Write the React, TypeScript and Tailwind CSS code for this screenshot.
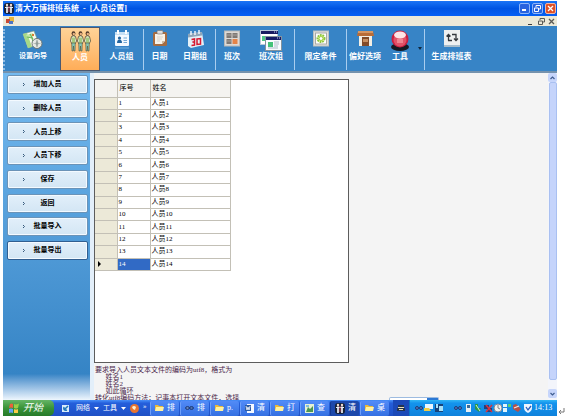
import type { ReactNode } from 'react';

const people = Array.from({ length: 14 }, (_, i) => i + 1);
const actions = ['增加人员', '删除人员', '人员上移', '人员下移', '保存', '返回', '批量导入', '批量导出'];

function WizardIcon() {
  return (
    <svg width="22" height="20" viewBox="0 0 22 20">
      <path d="M1 4 12 1l5 13-11 4z" fill="#f7fbef" stroke="#7f9d82" strokeWidth=".6" />
      <path d="m1 4 4-1 5 14-4 1z" fill="#a6d987" />
      <path d="m4 5 7-2 1 3-6 2z" fill="#c5e6a6" />
      <path d="m5 7 5 1 1 4 4 1M8 4l3 5" fill="none" stroke="#6cb75e" strokeWidth="1.100" />
      <path d="m10 4 2 2M12 4l-2 2" stroke="#d87b32" />
      <circle cx="15" cy="13.500" r="5" fill="#e6e9e4" stroke="#6b7575" />
      <path d="m15 10 1.200 3.500L15 17l-1.200-3.500zM11.500 13.500h7" fill="#8f9b98" stroke="#8f9b98" strokeWidth=".5" />
    </svg>
  );
}

function PeopleIcon() {
  return (
    <svg width="21" height="21" viewBox="0 0 21 21">
      {[3.5, 10.5, 17.5].map((x) => (
        <g key={x} transform={`translate(${x} 0)`}>
          <ellipse cx="0" cy="2.500" rx="1.900" ry="2.200" fill="#4a3426" />
          <circle cx=".3" cy="3" r="1.200" fill="#e6b083" />
          <path d="M-2 5.500Q0 4 2 5.500L3 10 1.500 13h-3L-3 10z" fill="#eef4d6" stroke="#4b4b35" strokeWidth=".8" />
          <path d="M-1.500 6.500h3V12h-3z" fill="#a5cb80" />
          <path d="M-1.800 12h3.600L1.500 20H.4L0 15l-.4 5h-1.100z" fill="#86c6b4" stroke="#54543b" strokeWidth=".6" />
        </g>
      ))}
    </svg>
  );
}

function GroupIcon() {
  return (
    <svg width="16" height="19" viewBox="0 0 16 19">
      <rect x="1" y="2" width="14" height="14" rx="1" fill="#f4faff" />
      <path d="M1 2h14v3H1z" fill="#c6e0f5" />
      <path d="M4 0v4M12 0v4" stroke="#fff" strokeWidth="2" />
      <circle cx="5.500" cy="8" r="1.600" fill="#23659f" />
      <path d="M3 13q0-3.500 2.500-3.500T8 13z" fill="#23659f" />
      <path d="M9.500 8H13M9.500 10.500H13M9.500 12.500H13" stroke="#75a9d5" />
      <path d="M1 18h14" stroke="#75b1df" />
    </svg>
  );
}

function ClipboardIcon() {
  return (
    <svg width="16" height="19" viewBox="0 0 16 19">
      <rect x="1" y="2" width="14" height="14" rx="1.500" fill="#a56c42" />
      <path d="M3 4h10v7l-3 3H3z" fill="#f8f3ea" />
      <path d="M13 11h-3v3z" fill="#cfbba3" />
      <rect x="5" y=".5" width="6" height="3.500" rx="1" fill="#dedede" stroke="#78706a" strokeWidth=".6" />
      <path d="M5 7h6M5 9h5M5 11h3" stroke="#cfc6bd" strokeWidth=".7" />
    </svg>
  );
}

function CalendarIcon() {
  return (
    <svg width="17" height="19" viewBox="0 0 17 19">
      <path d="m1 4 14-2 2 13-13 3L1 16z" fill="#e4f0f7" />
      <path d="m1 4 14-2v3.500L1 7.500z" fill="#8fa6ba" />
      <path d="M4 1v4M8 1v4M12 0v4" stroke="#f8fbff" strokeWidth="1.400" />
      <path d="m4.500 9.500 3-.5v2.700l-2 .3 2 .2V15l-3 .5M10 9l3.500-.5V14l-3.500.5z" fill="none" stroke="#d71930" strokeWidth="1.500" />
    </svg>
  );
}

function ShiftIcon() {
  return (
    <svg width="16" height="19" viewBox="0 0 16 19">
      <rect x=".5" y="1" width="15" height="15" fill="#ddd9d5" stroke="#b7b7b6" />
      <path d="M2.500 3H7.500v5h-5zM8.500 3h5v5h-5zM2.500 9h5v5h-5z" fill="#7f7975" />
      <path d="M8.500 9h5v5h-5z" fill="#e48348" />
      <path d="M3 5h4M9 5h4M3 11h4" stroke="#a5a09b" />
    </svg>
  );
}

function WindowsIcon() {
  return (
    <svg width="22" height="21" viewBox="0 0 22 21">
      <rect x=".5" y=".5" width="17" height="14" fill="#fff" stroke="#b8c9db" />
      <path d="M1 1h17v3H1z" fill="#181b61" />
      <path d="M2 6h3v5H2z" fill="#4fc889" />
      <rect x="5.500" y="6.500" width="16" height="14" fill="#f8fbff" stroke="#83929e" />
      <path d="M6 7h15v3H6z" fill="#171c66" />
      <path d="M8 12h5v5H8z" fill="#43c27a" />
      <path d="M14 12h5M14 14h5M14 16h4M8 18h10" stroke="#adbdca" />
      <path d="M14 2h3M17 8h3" stroke="#c4cff7" strokeDasharray="1 1" />
    </svg>
  );
}

function GearIcon() {
  return (
    <svg width="16" height="19" viewBox="0 0 16 19">
      <rect x=".5" y="1" width="15" height="15" fill="#e2e1dc" stroke="#bdc0bd" />
      <rect x="2.500" y="3" width="11" height="11" fill="#fff" stroke="#a9aaa6" />
      <circle cx="8" cy="8.500" r="3.500" fill="#edf69d" stroke="#8cc63e" strokeWidth="2" strokeDasharray="1.700 .8" />
      <circle cx="8" cy="8.500" r="2" fill="#fff" stroke="#9bce42" />
    </svg>
  );
}

function ShopIcon() {
  return (
    <svg width="17" height="19" viewBox="0 0 17 19">
      <path d="M2 5h13v11H2z" fill="#f4eee3" />
      <path d="M1 1h15l1 5H0z" fill="#b86c37" />
      <path d="M1 1h15v2H1z" fill="#d59765" />
      <path d="M5 7h7v9H5z" fill="#824b29" />
      <path d="M6 9h5v3H6z" fill="#c68e60" />
    </svg>
  );
}

function BallIcon() {
  return (
    <svg width="18" height="21" viewBox="0 0 18 21">
      <ellipse cx="9" cy="17" rx="9" ry="4" fill="#151a24" />
      <circle cx="9" cy="9" r="8.500" fill="#c91e3f" />
      <circle cx="9" cy="10" r="6.500" fill="#e15268" />
      <ellipse cx="9" cy="5" rx="6" ry="3.500" fill="#ffe4e5" />
      <path d="M6 9h6v4H6z" fill="#f698a3" opacity=".7" />
    </svg>
  );
}

function GenerateIcon() {
  return (
    <svg width="16" height="19" viewBox="0 0 16 19">
      <path d="M0 0h16v15H0z" fill="#eef0f0" />
      <path d="M0 15h16v2H0z" fill="#a7bdcc" />
      <path d="M4.500 10.500V4.500M2.500 6.500l2-2 2 2M4 10.500h4M8 4.500h4v6M10 8.500l2 2 2-2" fill="none" stroke="#34383d" strokeWidth="1.300" />
    </svg>
  );
}

function AppIcon() {
  return (
    <svg width="10" height="11" viewBox="0 0 10 11" className="shrink-0">
      <rect width="10" height="11" rx="3" fill="#152239" />
      <circle cx="3" cy="2" r="1.200" fill="#f0d9cd" />
      <circle cx="7" cy="2" r="1.200" fill="#f0d9cd" />
      <path d="M3 3.500V10M7 3.500V10" stroke="#fff" strokeWidth="1.600" />
      <path d="M1 4.500h8" stroke="#e7eef6" />
      <path d="M5 3v6" stroke="#c14255" />
    </svg>
  );
}

function FolderIcon() {
  return (
    <svg width="9" height="8" viewBox="0 0 9 8">
      <path d="M0 1h3l1 1h4v5H0z" fill="#e9b93b" />
      <path d="M0 7 1 3h8L8 7z" fill="#fff1a0" />
    </svg>
  );
}

function GlassesIcon() {
  return (
    <svg width="9" height="8" viewBox="0 0 9 8">
      <ellipse cx="2.500" cy="4" rx="1.900" ry="1.400" fill="#7090c5" stroke="#173474" />
      <ellipse cx="6.500" cy="4" rx="1.900" ry="1.400" fill="#567ab4" stroke="#173474" />
    </svg>
  );
}

function DocIcon() {
  return (
    <svg width="9" height="9" viewBox="0 0 9 9">
      <path d="M2 0h7v9H2z" fill="#f5f9ff" />
      <path d="M0 1h6v6H0z" fill="#2c5ca5" />
      <path d="m1 2 1 4 1-3 1 3 1-4" fill="none" stroke="#fff" strokeWidth=".8" />
    </svg>
  );
}

function PictureIcon() {
  return (
    <svg width="9" height="9" viewBox="0 0 9 9">
      <path d="M0 0h9v9H0z" fill="#e6f1d2" />
      <path d="m1 8 2-5 2 2 3-3v6z" fill="#4b9554" />
      <path d="M1 1h3v2H1z" fill="#81bce0" />
    </svg>
  );
}

function Tool({ label, icon, width, active = false, small = false }: { label: string; icon: ReactNode; width: string; active?: boolean; small?: boolean }) {
  return (
    <button
      className={`${width} flex h-full shrink-0 flex-col items-center whitespace-nowrap pt-[3px] font-bold text-white ${
        active ? 'border border-[#4b5870] bg-linear-to-b from-[#ffd397] to-[#ffad58]' : ''
      }`}
    >
      <span className="flex h-[21px] items-start justify-center">{icon}</span>
      <span className={small ? 'text-[7px] leading-[11px]' : 'text-[8px] leading-[11px]'}>{label}</span>
    </button>
  );
}

function Divider() {
  return <span className="h-[41px] w-px shrink-0 bg-[#a9cdef]" />;
}

function Task({ label, icon, active = false }: { label: string; icon: ReactNode; active?: boolean }) {
  return (
    <button
      className={`flex h-[15px] w-[29px] shrink-0 items-center gap-[3px] rounded-[2px] border-l pl-1 text-[8px] text-white ${
        active ? 'border-[#12378f] bg-[#1c48ab]' : 'border-[#6fa1fb] bg-linear-to-b from-[#528bf7] to-[#3470e2]'
      }`}
    >
      {icon}
      {label}
    </button>
  );
}

function RestoreGlyph() {
  return (
    <svg width="7" height="7" viewBox="0 0 7 7" fill="none" stroke="currentColor">
      <path d="M2 2V.5h4.500V4H5M.5 3h4v3.500h-4z" />
    </svg>
  );
}

function CloseGlyph() {
  return (
    <svg width="7" height="7" viewBox="0 0 7 7" stroke="currentColor" strokeWidth="1.300">
      <path d="m1 1 5 5M6 1 1 6" />
    </svg>
  );
}

function TitleBar() {
  return (
    <header className="flex h-[15px] shrink-0 items-center gap-px bg-linear-to-b from-[#1b74f5] via-[#0054e3] to-[#0660f5] px-px text-white">
      <AppIcon />
      <h1 className="flex-1 whitespace-pre text-[8px] leading-[12px] font-bold">清大万博排班系统  -  [人员设置]</h1>
      <div className="flex gap-[2px]">
        <button aria-label="最小化" className="flex size-[11px] items-end rounded-[2px] border border-[#8db5fa] bg-[#2863df] p-0.5">
          <span className="h-[2px] w-1 bg-white" />
        </button>
        <button aria-label="还原" className="flex size-[11px] items-center justify-center rounded-[2px] border border-[#8db5fa] bg-[#2863df]">
          <RestoreGlyph />
        </button>
        <button aria-label="关闭" className="flex size-[11px] items-center justify-center rounded-[2px] border border-[#efb5a5] bg-[#df5027]">
          <CloseGlyph />
        </button>
      </div>
    </header>
  );
}

function MenuStrip() {
  return (
    <div className="flex h-[10px] shrink-0 items-center gap-[3px] bg-[#ece9d8] pl-[3px] pr-[2px] text-[#5a5a56]">
      <svg width="8" height="8" viewBox="0 0 8 8">
        <path d="M3 0h5v5H3z" fill="#e5b63f" />
        <path d="M0 2h4v4H0z" fill="#c94a34" />
        <path d="M3 4h4v3H3z" fill="#4d76c4" />
      </svg>
      <span className="flex-1" />
      <button aria-label="最小化子窗口" className="flex size-[7px] items-end">
        <span className="h-px w-1 bg-[#3c3c3c]" />
      </button>
      <button aria-label="还原子窗口"><RestoreGlyph /></button>
      <button aria-label="关闭子窗口"><CloseGlyph /></button>
    </div>
  );
}

function Toolbar() {
  return (
    <nav className="flex h-[47px] shrink-0 items-center border-b-2 border-[#7592ad] bg-[#3784c6] pt-px">
      <span className="h-[41px] w-[3px] shrink-0 border-l-2 border-dotted border-[#8fbce4]" />
      <Tool label="设置向导" icon={<WizardIcon />} width="w-[54px]" small />
      <Tool label="人员" icon={<PeopleIcon />} width="w-[40px]" active />
      <Tool label="人员组" icon={<GroupIcon />} width="w-[43px]" />
      <Divider />
      <Tool label="日期" icon={<ClipboardIcon />} width="w-[31px]" />
      <Tool label="日期组" icon={<CalendarIcon />} width="w-[40px]" />
      <Divider />
      <Tool label="班次" icon={<ShiftIcon />} width="w-[32px]" />
      <Tool label="班次组" icon={<WindowsIcon />} width="w-[46px]" />
      <Divider />
      <Tool label="限定条件" icon={<GearIcon />} width="w-[51px]" />
      <Divider />
      <Tool label="偏好选项" icon={<ShopIcon />} width="w-[36px]" />
      <Tool label="工具" icon={<BallIcon />} width="w-[34px]" />
      <svg width="7" height="4" viewBox="0 0 7 4" className="shrink-0"><path d="M1 0h4L3 3z" fill="#10283f" /></svg>
      <Divider />
      <Tool label="生成排班表" icon={<GenerateIcon />} width="w-[53px]" />
    </nav>
  );
}

function Sidebar() {
  return (
    <aside className="w-[87px] shrink-0 bg-linear-to-b from-[#74baf0] from-0% via-[#3584c5] via-92% to-[#eef6fd] to-100% pt-[2px] pr-[2px] pl-1">
      <div className="flex h-[185px] flex-col justify-between">
        {actions.map((action, i) => (
          <button
            key={action}
            className={`flex h-[19px] items-center rounded-[2px] border bg-linear-to-b from-[#e2effa] to-[#d3e6f4] text-[7px] font-bold text-black shadow-[inset_0_0_0_1px_#f4faff] ${
              i === actions.length - 1 ? 'border-[#315f91]' : 'border-[#6b93b7]'
            }`}
          >
            <svg width="4" height="5" viewBox="0 0 4 5" className="ml-[14px] shrink-0"><path d="m1 1 1.500 1.500L1 4" fill="none" stroke="#35587a" /></svg>
            <span className="flex-1 pr-[18px] text-center">{action}</span>
          </button>
        ))}
      </div>
    </aside>
  );
}

function PeopleTable() {
  return (
    <table className="h-[191px] w-[136px] table-fixed border-collapse text-left text-[7px] leading-[9px] text-black">
      <colgroup>
        <col className="w-[22px]" />
        <col className="w-[33px]" />
        <col />
      </colgroup>
      <thead>
        <tr className="h-[17px] bg-[#f4f3f0]">
          <th aria-label="当前行" className="border-r border-b border-[#c3c0b6]" />
          <th className="border-r border-b border-[#c3c0b6] pl-[2px] font-normal">序号</th>
          <th className="border-r border-b border-[#c3c0b6] pl-[2px] font-normal">姓名</th>
        </tr>
      </thead>
      <tbody>
        {people.map((n) => (
          <tr key={n}>
            <td className="border-r border-b border-[#c3c0b6] bg-[#ece9d8] p-0">
              {n === 14 && (
                <svg width="4" height="6" viewBox="0 0 4 6" className="ml-[3px]"><path d="M0 0 3 3 0 6z" /></svg>
              )}
            </td>
            <td className={`border-r border-b border-[#c3c0b6] p-0 pl-px ${n === 14 ? 'bg-[#316ac5] text-white' : ''}`}>{n}</td>
            <td className="border-r border-b border-[#c3c0b6] p-0 pl-px">人员{n}</td>
          </tr>
        ))}
      </tbody>
    </table>
  );
}

function ScrollBar() {
  return (
    <div className="flex w-[9px] shrink-0 flex-col items-center bg-[#f3f5fb] text-[#3f5d91]">
      <button aria-label="向上滚动" className="flex h-[9px] w-full items-center justify-center rounded-[2px] bg-[#c6d5fb]">
        <svg width="5" height="4" viewBox="0 0 5 4"><path d="m.5 3 2-2 2 2" fill="none" stroke="currentColor" strokeWidth="1.200" /></svg>
      </button>
      <span className="w-[8px] flex-1 rounded-[2px] border border-[#a9c0f1] bg-[#c5d4fb]" />
      <span className="h-[9px]" />
      <button aria-label="向下滚动" className="flex h-[9px] w-full items-center justify-center rounded-[2px] bg-[#c6d5fb]">
        <svg width="5" height="4" viewBox="0 0 5 4"><path d="m.5 1 2 2 2-2" fill="none" stroke="currentColor" strokeWidth="1.200" /></svg>
      </button>
      <span className="h-[2px]" />
    </div>
  );
}

function Content() {
  return (
    <main className="relative min-w-0 flex-1 overflow-hidden border-l-4 border-[#e3effa] bg-[#f4f4f4] pt-[6px]">
      <section className="h-[284px] w-[255px] border border-[#5c5c5c] bg-white">
        <PeopleTable />
      </section>
      <p className="whitespace-pre pt-1 pl-px text-[7px] leading-[7px] text-[#4a1f4a]">
        {'要求导入人员文本文件的编码为utf8，格式为\n      姓名1\n      姓名2\n      如此循环\n转化utf8编码方法：记事本打开文本文件，选择'}
      </p>
      <div className="absolute bottom-0 left-[295px] flex h-[3px] w-[50px] rounded-t-[2px] border border-b-0 border-[#9dbbe0] bg-white">
        <span className="ml-auto w-[11px] bg-[#2b78d5]" />
      </div>
    </main>
  );
}

function TrayIcons() {
  return (
    <svg width="132" height="12" viewBox="0 0 132 12" className="shrink-0">
      <g fill="#5875bb" stroke="#1b3c79">
        <circle cx="7" cy="6" r="1.500" /><circle cx="11" cy="6" r="1.500" />
        <circle cx="46" cy="6" r="1.500" /><circle cx="50" cy="6" r="1.500" />
      </g>
      <path d="M15 2h8v5h-4l-3 2V7h-1z" fill="#e8f6ff" />
      <path d="M14 6h5l2 3h-7z" fill="#f1cd45" />
      <path d="M25 2h8v8h-8z" fill="#184379" />
      <path d="M26 2h2v4h-2zM29 4h4v5h-4z" fill="#a7e1f7" />
      <path d="M56 2h5v8h-5z" fill="#e8eff3" /><path d="M57 3h3v3h-3z" fill="#376b99" />
      <path d="M65 2h3v4h3l-2 4-4-3z" fill="#29974c" /><path d="m66 3 4 6" stroke="#d5f3cc" />
      <path d="M74 3h5v4h-5zM77 6h5v4h-5z" fill="#273f79" /><path d="m76 3 6 7M82 3l-6 7" stroke="#da343e" strokeWidth="1.500" />
      <circle cx="88" cy="6" r="4" fill="#f1f2ed" stroke="#818898" /><path d="M88 3v3l2 1" fill="none" stroke="#7c818c" />
      <path d="M93 2h4v3h-4zM93 6h4v4h-4z" fill="#e1f5fc" /><path d="M98 2h3v3h-3z" fill="#58cf72" />
      <path d="m103 3 3-1 5 5-3 3-5-3z" fill="#b3514a" /><path d="m104 6 5-2" stroke="#f3e6df" strokeWidth="1.300" />
      <path d="M114 2h8v4q0 3-4 5-4-2-4-5z" fill="#edf4fe" /><path d="m116 5 2 3 3-4" fill="none" stroke="#275cbd" strokeWidth="1.300" />
    </svg>
  );
}

function Caret() {
  return <svg width="5" height="3" viewBox="0 0 5 3" className="shrink-0"><path d="M0 0h5L2.500 3z" fill="#fff" /></svg>;
}

function TaskBar() {
  return (
    <footer className="flex h-4 shrink-0 items-center bg-linear-to-b from-[#4990f9] via-[#245edb] via-20% to-[#1f50c5] text-white">
      <button className="flex h-4 w-[51px] shrink-0 items-center gap-1 rounded-r-[5px] bg-linear-to-b from-[#65b565] via-[#399338] to-[#267a29] pl-1.5 text-[10px] leading-[14px] italic">
        <svg width="10" height="10" viewBox="0 0 10 10">
          <path d="M1 1q2-1 3 0v4q-2-1-4 0z" fill="#ed613b" /><path d="M5 1q2 1 5-.5L9 5q-2 1-4 0z" fill="#99cf45" />
          <path d="M0 6q2-1 4 0v4q-2-1-4 0z" fill="#62a2f4" /><path d="M5 6q2 1 4 0v4q-2 1-4 0z" fill="#f9cd47" />
        </svg>
        开始
      </button>
      <div className="flex w-[96px] shrink-0 items-center gap-1 pl-2 text-[7px]">
        <svg width="8" height="9" viewBox="0 0 8 9"><path d="M0 1h7v7H0z" fill="#d9ecfa" /><path d="m2 6 4-4M2 3q-1 4 3 3" fill="none" stroke="#2176b9" strokeWidth="1.500" /></svg>
        <a href="#network" className="ml-[2px] shrink-0">网络</a>
        <Caret />
        <a href="#tools" className="shrink-0">工具</a>
        <Caret />
        <svg width="9" height="9" viewBox="0 0 9 9" className="shrink-0"><circle cx="4.500" cy="4.500" r="4.500" fill="#e87531" /><path d="M2 3q2-2 4 0L5 6 3 5z" fill="#fff0cf" /></svg>
        <span className="pb-1">»</span>
      </div>
      <div className="flex min-w-0 flex-1 items-center gap-px">
        <Task label="排" icon={<FolderIcon />} />
        <Task label="排" icon={<GlassesIcon />} />
        <Task label="p." icon={<FolderIcon />} />
        <Task label="清" icon={<DocIcon />} />
        <Task label="打" icon={<FolderIcon />} />
        <Task label="查" icon={<PictureIcon />} />
        <Task label="清" icon={<AppIcon />} active />
        <Task label="桌" icon={<FolderIcon />} />
      </div>
      <button aria-label="语言栏" className="flex h-4 w-[16px] shrink-0 items-center justify-center bg-[#1b49b8]">
        <svg width="8" height="8" viewBox="0 0 8 8"><path d="M1 1h6v2H1zM0 4h8v3H0z" fill="#25334f" /><path d="M1 3.500h6M2 5.500h4" stroke="#eadfb5" /></svg>
      </button>
      <div className="flex h-4 w-[148px] shrink-0 items-center border-l border-[#0b75c8] bg-linear-to-b from-[#31b6f5] via-[#1393ed] via-20% to-[#0f82dc] text-[8px]">
        <TrayIcons />
        <time className="-ml-[8px]">14:13</time>
      </div>
    </footer>
  );
}

export default function App() {
  return (
    <div className="flex h-screen items-end gap-px bg-white pt-px pr-[3px] pb-px pl-[3px] font-['Liberation_Serif','Noto_Sans_CJK_SC',sans-serif]">
      <div className="flex h-full min-w-0 flex-1 flex-col overflow-hidden">
        <TitleBar />
        <MenuStrip />
        <Toolbar />
        <div className="flex min-h-0 flex-1">
          <Sidebar />
          <Content />
          <ScrollBar />
        </div>
        <TaskBar />
      </div>
      <svg width="7" height="8" viewBox="0 0 7 8" className="shrink-0">
        <path d="M6 0v4H1M3 2 1 4l2 2" fill="none" stroke="#777" />
      </svg>
    </div>
  );
}
